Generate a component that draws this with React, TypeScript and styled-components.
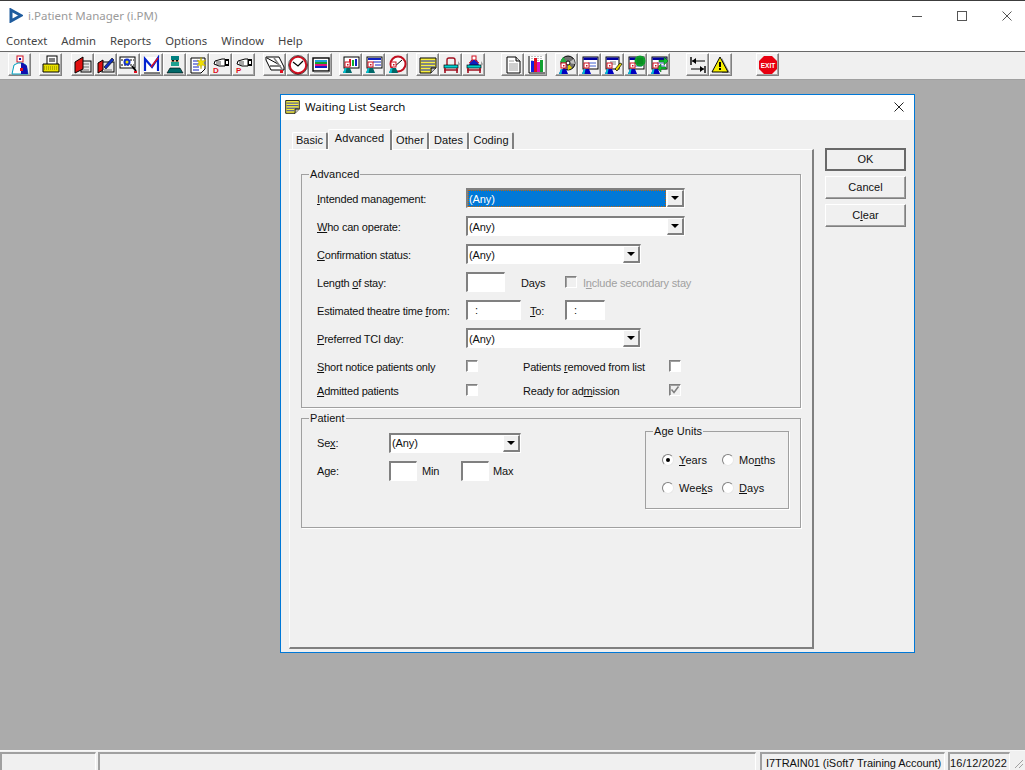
import React from 'react'
import styled, { createGlobalStyle } from 'styled-components'

const GlobalStyle = createGlobalStyle`
html, body {
  margin: 0;
  padding: 0;
  background: #ababab;
}
* {
  box-sizing: border-box;
}
`

const Page = styled.div`
width: 1025px;
height: 770px;
overflow: hidden;
display: flex;
flex-direction: column;
font-family: "Liberation Sans", Arial, sans-serif;
font-size: 11px;
letter-spacing: 0.05px;
color: #111;
`

const TitleBar = styled.div`
height: 30px;
flex: none;
background: #fff;
border-top: 1px solid #3c3c3c;
display: flex;
align-items: center;
padding: 0 13px 0 9px;
`

const AppTitle = styled.span`
margin-left: 5px;
font-family: "Noto Sans", sans-serif;
font-size: 11.5px;
letter-spacing: 0;
color: #9a9a9a;
`

const WindowControls = styled.div`
margin-left: auto;
display: flex;
align-items: center;
gap: 35px;
`

const MenuBar = styled.div`
height: 21px;
flex: none;
background: #fff;
display: flex;
align-items: center;
gap: 14px;
padding-left: 6px;
font-family: "Noto Sans", sans-serif;
font-size: 11.3px;
letter-spacing: 0;
color: #444;
`

const Toolbar = styled.div`
height: 28px;
flex: none;
background: #f0f0f0;
border-top: 1px solid #696969;
display: flex;
align-items: center;
padding: 0 0 2px 8px;
`

const ToolGroup = styled.div<{ $gap: number }>`
display: flex;
margin-left: ${p => p.$gap}px;
`

const ToolButton = styled.button`
width: 23px;
height: 23px;
padding: 0;
background: #f0f0f0;
border: 1px solid;
border-color: #fff #808080 #808080 #fff;
box-shadow: inset -1px -1px 0 #a8a8a8;
display: flex;
align-items: center;
justify-content: center;
`

const Workspace = styled.div`
flex: 1;
min-height: 0;
background: #ababab;
border-top: 1px solid #a0a0a0;
padding: 14px 0 0 280px;
`

const Dialog = styled.div`
width: 635px;
height: 559px;
background: #f0f0f0;
border: 1px solid #0078d7;
display: flex;
flex-direction: column;
`

const DialogTitle = styled.div`
height: 25px;
flex: none;
background: #fff;
display: flex;
align-items: center;
padding: 1px 10px 3px 3px;
font-family: "Noto Sans", sans-serif;
font-size: 11.5px;
letter-spacing: -0.1px;
color: #111;
`

const DialogTitleText = styled.span`
margin-left: 4px;
`

const DialogClose = styled.span`
margin-left: auto;
display: flex;
`

const DialogBody = styled.div`
flex: 1;
min-height: 0;
display: flex;
padding: 9px 0 3px 8px;
`

const TabColumn = styled.div`
width: 525px;
display: flex;
flex-direction: column;
`

const TabStrip = styled.div`
height: 20px;
flex: none;
display: flex;
align-items: flex-end;
padding-left: 3px;
position: relative;
z-index: 1;
`

const Tab = styled.div<{ $active?: boolean; $width: number }>`
width: ${p => p.$width}px;
height: ${p => (p.$active ? 21 : 17)}px;
margin-bottom: ${p => (p.$active ? -1 : 0)}px;
padding-top: ${p => (p.$active ? 2 : 1)}px;
background: #f0f0f0;
border-top: 1px solid #fff;
border-left: 1px solid #fff;
border-right: 2px solid #808080;
border-radius: 2px 2px 0 0;
text-align: center;
`

const TabPanel = styled.div`
flex: 1;
background: #f0f0f0;
border-top: 1px solid #fff;
border-left: 1px solid #fff;
border-right: 2px solid #808080;
border-bottom: 2px solid #808080;
padding: 24px 11px 0 11px;
`

const Group = styled.div<{ $height: number; $width?: number; $top?: number }>`
position: relative;
flex: none;
width: ${p => (p.$width ? `${p.$width}px` : 'auto')};
height: ${p => p.$height}px;
margin-top: ${p => p.$top ?? 0}px;
border: 1px solid #a0a0a0;
box-shadow: 1px 1px 0 #fff;
`

const Legend = styled.span`
position: absolute;
left: 7px;
top: -7px;
padding: 0 1px;
background: #f0f0f0;
line-height: 13px;
`

const AdvancedBody = styled.div`
padding: 9px 0 0 15px;
`

const Row = styled.div<{ $height?: number }>`
display: flex;
align-items: center;
height: ${p => p.$height ?? 28}px;
`

const Label = styled.span<{ $width?: number; $left?: number; $disabled?: boolean }>`
flex: none;
width: ${p => (p.$width ? `${p.$width}px` : 'auto')};
margin-left: ${p => p.$left ?? 0}px;
padding-top: 2px;
letter-spacing: -0.2px;
color: ${p => (p.$disabled ? '#a0a0a0' : 'inherit')};
white-space: nowrap;
`

const Sunken = styled.div<{ $width: number }>`
flex: none;
position: relative;
width: ${p => p.$width}px;
height: 20px;
background: #fff;
border-style: solid;
border-width: 2px 1px 1px 2px;
border-color: #808080 #fff #fff #808080;
line-height: 16px;
`

const TimeColon = styled.span`
margin-left: 7px;
`

const ComboValue = styled.div<{ $selected?: boolean }>`
height: 17px;
margin-right: 18px;
padding: 1px 0 0 1px;
line-height: 16px;
letter-spacing: -0.1px;
background: ${p => (p.$selected ? '#0078d7' : 'transparent')};
color: ${p => (p.$selected ? '#fff' : 'inherit')};
outline: ${p => (p.$selected ? '1px dotted #c2660a' : 'none')};
outline-offset: -1px;
`

const ComboButton = styled.div`
position: absolute;
right: 0;
top: 0;
width: 17px;
height: 17px;
background: #f0f0f0;
border-style: solid;
border-width: 1px 2px 2px 1px;
border-color: #fff #808080 #808080 #fff;
display: flex;
align-items: center;
justify-content: center;
&::after {
  content: "";
  border-style: solid;
  border-width: 4px 4px 0 4px;
  border-color: #000 transparent transparent transparent;
}
`

const Check = styled.div<{ $disabled?: boolean }>`
flex: none;
width: 12px;
height: 12px;
background: ${p => (p.$disabled ? '#f0f0f0' : '#fff')};
border-style: solid;
border-width: 1px;
border-color: #808080 #fff #fff #808080;
box-shadow: inset 1px 1px 0 #a0a0a0;
display: flex;
`

const PatientBody = styled.div`
display: flex;
justify-content: space-between;
padding: 10px 11px 0 15px;
`

const PatientFields = styled.div`
display: flex;
flex-direction: column;
${Label} {
  padding-top: 0;
}
${ComboValue} {
  padding-top: 0;
}
`

const Radio = styled.span<{ $on?: boolean }>`
flex: none;
width: 12px;
height: 12px;
border-radius: 50%;
background: #fff;
border: 1px solid;
border-color: #808080 #e8e8e8 #e8e8e8 #808080;
display: flex;
align-items: center;
justify-content: center;
margin-right: 5px;
&::after {
  content: "";
  width: 4px;
  height: 4px;
  border-radius: 50%;
  background: ${p => (p.$on ? '#000' : 'transparent')};
}
`

const RadioGrid = styled.div`
display: grid;
grid-template-columns: 60px 60px;
grid-auto-rows: 28px;
padding: 14px 0 0 16px;
`

const RadioItem = styled.div`
display: flex;
align-items: center;
white-space: nowrap;
`

const SideButtons = styled.div`
margin: 19px 0 0 11px;
width: 81px;
display: flex;
flex-direction: column;
gap: 5px;
`

const PushButton = styled.div<{ $default?: boolean }>`
height: 23px;
padding-bottom: 2px;
background: #f0f0f0;
border-style: solid;
border-width: ${p => (p.$default ? 2 : 1)}px;
border-color: ${p => (p.$default ? '#696969' : '#fff #808080 #808080 #fff')};
box-shadow: ${p => (p.$default ? 'none' : 'inset -1px -1px 0 #a0a0a0')};
display: flex;
align-items: center;
justify-content: center;
`

const StatusBar = styled.div`
height: 20px;
flex: none;
background: #f0f0f0;
border-top: 1px solid #f8f8f8;
padding-top: 1px;
display: flex;
position: relative;
`

const StatusPanel = styled.div<{ $width: number; $gap?: number; $pad?: number; $spacing?: number }>`
flex: none;
width: ${p => p.$width}px;
margin-right: ${p => p.$gap ?? 0}px;
padding: 3px 0 0 ${p => p.$pad ?? 0}px;
border-top: 2px solid #a0a0a0;
border-left: 2px solid #a0a0a0;
border-right: 1px solid #fff;
letter-spacing: ${p => p.$spacing ?? 0}px;
white-space: nowrap;
`

const Grip = styled.svg`
position: absolute;
right: 1px;
bottom: 1px;
`

const Icon: React.FC<{ children: React.ReactNode }> = ({ children }) => (
  <svg width="20" height="20" viewBox="0 0 20 20">{children}</svg>
)

// small figure with the red check head, used on most patient tools
const Figure: React.FC<{ x?: number; y?: number; color?: string }> = ({ x = 0, y = 0, color = '#0000c0' }) => (
  <g transform={`translate(${x} ${y})`}>
    <rect x="3" y="0" width="5" height="5" fill="#fff" stroke="#d01020" strokeWidth="1" />
    <rect x="5" y="2" width="1.5" height="1.5" fill="#d01020" />
    <path d="M1 11 L3 6 H8 L10 11 Z" fill={color} />
    <path d="M1 11 L3 6 H4.5 L3.5 11 Z" fill="#00c0d0" />
  </g>
)

const Form: React.FC = () => (
  <>
    <rect x="3" y="2" width="15" height="12" fill="#fff" stroke="#000" />
    <rect x="3.5" y="2.5" width="14" height="2.5" fill="#0000a0" />
    <path d="M8 8 H16 M8 11 H16" stroke="#4060d0" />
  </>
)

const Bed: React.FC = () => (
  <>
    <rect x="3" y="10" width="14" height="3" fill="#00d0d0" stroke="#000" strokeWidth="0.7" />
    <path d="M4 13 V18 M16 13 V18 M3 15 H17" stroke="#a01020" strokeWidth="1.6" />
    <path d="M17 6 L19 9 L17 12 Z" fill="#a0a0a0" />
  </>
)

const Hand: React.FC<{ letter: string }> = ({ letter }) => (
  <>
    <path d="M4 6 L11 4 H14 V11 H8 L3 9 Z" fill="#fff" stroke="#000" />
    <rect x="14" y="4" width="4" height="7" fill="#000" />
    <rect x="15" y="6" width="2" height="3" fill="#fff" />
    <path d="M5 7 H10 M5 9 H10" stroke="#000" strokeWidth="0.7" />
    <text x="2" y="18" fontFamily="Liberation Sans" fontWeight="700" fontSize="8" fill="#e01020">{letter}</text>
  </>
)

const ICONS: Record<string, React.ReactNode> = {
  doctor: (
    <>
      <rect x="7" y="1" width="6" height="6" fill="#fff" stroke="#d01020" />
      <rect x="9" y="3" width="2" height="2" fill="#0000a0" />
      <path d="M2 19 L4 10 L8 8 H12 L16 10 L18 19 Z" fill="#fff" stroke="#00a0c0" />
      <path d="M11 8 H13 L17 11 L18 19 H11 Z" fill="#1010b0" />
      <rect x="10" y="13" width="3" height="3" fill="#e01020" />
    </>
  ),
  printer: (
    <>
      <rect x="6" y="1" width="10" height="9" fill="#fff" stroke="#000" />
      <path d="M8 4 H14 M8 6 H14" stroke="#000" />
      <path d="M2 9 H18 V17 H2 Z" fill="#e8e000" stroke="#000" />
      <path d="M3 12 H17 M3 14 H17" stroke="#807800" strokeDasharray="1 1" />
    </>
  ),
  bookRed: (
    <>
      <rect x="8" y="6" width="10" height="11" fill="#e8e8e8" stroke="#000" />
      <path d="M9 9 H16 M9 12 H16 M9 15 H16" stroke="#707070" />
      <path d="M2 7 L10 2 V14 L2 18 Z" fill="#e01010" stroke="#000" />
    </>
  ),
  bookPen: (
    <>
      <rect x="6" y="7" width="12" height="10" fill="#e8e8e8" stroke="#000" />
      <path d="M2 8 L7 5 V15 L2 18 Z" fill="#e01010" stroke="#000" />
      <path d="M8 12 L16 3 L18 5 L10 14 Z" fill="#1030c0" stroke="#000" strokeWidth="0.6" />
      <path d="M8 15 H16" stroke="#707070" />
    </>
  ),
  search: (
    <>
      <rect x="1" y="2" width="15" height="11" fill="#fff" stroke="#000" />
      <path d="M2 5 H15 M2 10 H15" stroke="#000" strokeDasharray="2 1" />
      <circle cx="8" cy="7" r="3.5" fill="#1030d0" />
      <circle cx="8" cy="7" r="1.5" fill="#e8e000" />
      <path d="M13 11 L17 16" stroke="#000" strokeWidth="2" />
      <rect x="15" y="16" width="3" height="2" fill="#e01020" />
    </>
  ),
  mail: (
    <>
      <rect x="2" y="2" width="16" height="16" fill="#fff" />
      <path d="M3 16 V4 L10 12 L16 3 V16" fill="none" stroke="#0020d0" strokeWidth="2.2" />
      <path d="M9 12 L16 3" stroke="#e01020" strokeWidth="1.4" />
      <path d="M2 18 H18" stroke="#000" />
    </>
  ),
  surgeon: (
    <>
      <rect x="6" y="1" width="8" height="4" fill="#008080" />
      <rect x="6" y="5" width="8" height="5" fill="#e0b090" />
      <rect x="6" y="7" width="8" height="4" fill="#20a090" />
      <rect x="7" y="5" width="2" height="1.5" fill="#000" />
      <rect x="11" y="5" width="2" height="1.5" fill="#000" />
      <path d="M2 18 L5 13 H15 L18 18 Z" fill="#006868" stroke="#000" strokeWidth="0.6" />
    </>
  ),
  noteStar: (
    <>
      <path d="M3 3 H17 V14 L13 18 H3 Z" fill="#fff" stroke="#000" />
      <path d="M5 6 H11 M5 9 H11 M5 12 H11 M5 15 H11" stroke="#1020c0" />
      <path d="M13 2 L14 6 L18 5 L15 8 L18 11 L14 10 L13 14 L12 10 L9 11 L11 8 L9 5 L12 6 Z" fill="#f0e000" stroke="#a09000" strokeWidth="0.4" />
    </>
  ),
  handD: <Hand letter="D" />,
  handP: <Hand letter="P" />,
  letter: (
    <>
      <path d="M1 2 H14 L19 12 V15 H6 L1 5 Z" fill="#fff" stroke="#000" />
      <path d="M2 3 L13 9 M5 11 H16" stroke="#000" />
      <path d="M9 3 L17 14" stroke="#808080" strokeWidth="1.5" />
      <rect x="15" y="15" width="3" height="3" fill="#e01020" />
    </>
  ),
  clock: (
    <>
      <circle cx="10" cy="10" r="8.2" fill="#fff" stroke="#d01020" strokeWidth="2" />
      <circle cx="10" cy="10" r="9.5" fill="none" stroke="#000" strokeWidth="0.6" />
      <path d="M5 7 L10 11 L15 6" fill="none" stroke="#000" strokeWidth="1.2" />
    </>
  ),
  listing: (
    <>
      <rect x="2" y="3" width="16" height="13" fill="#fff" stroke="#000" strokeWidth="1.4" />
      <rect x="4" y="5" width="12" height="2" fill="#20a0e0" />
      <rect x="4" y="7" width="12" height="2" fill="#10a030" />
      <rect x="4" y="9" width="12" height="2" fill="#e01080" />
      <rect x="4" y="11" width="12" height="2" fill="#1020c0" />
      <path d="M3 17 H18" stroke="#808080" />
    </>
  ),
  monitorBars: (
    <>
      <rect x="3" y="2" width="15" height="11" fill="#fff" stroke="#000" />
      <rect x="8" y="4" width="2" height="7" fill="#e01020" />
      <rect x="11" y="5" width="2" height="6" fill="#10b030" />
      <rect x="14" y="4" width="2" height="7" fill="#1020c0" />
      <Figure x={1} y={7} color="#006868" />
    </>
  ),
  formFigure: (
    <>
      <rect x="3" y="2" width="15" height="11" fill="#fff" stroke="#000" />
      <path d="M4 4 H17" stroke="#1020c0" strokeWidth="2" />
      <path d="M9 7 H17 M11 10 H17" stroke="#1020c0" />
      <Figure x={1} y={7} color="#006868" />
    </>
  ),
  circleFigure: (
    <>
      <circle cx="11" cy="9" r="7.5" fill="#fff" stroke="#c01020" strokeWidth="2" />
      <path d="M7 12 L15 5" stroke="#000" />
      <Figure x={1} y={7} color="#006868" />
    </>
  ),
  notes: (
    <>
      <path d="M2 3 H18 V13 L13 18 H2 Z" fill="#f8f040" stroke="#000" />
      <path d="M3 6 H17 M3 9 H17 M3 12 H17 M3 15 H12" stroke="#1020c0" />
      <path d="M13 18 V13 H18" fill="#c0c0c0" stroke="#000" />
    </>
  ),
  bedEmpty: (
    <>
      <path d="M6 10 V5 Q6 3 8 3 H12 Q14 3 14 5 V10" fill="none" stroke="#a01020" strokeWidth="1.4" />
      <Bed />
    </>
  ),
  bedFigure: (
    <>
      <rect x="8" y="1" width="4" height="4" fill="#fff" stroke="#d01020" />
      <path d="M5 10 L7 5 H13 L15 10 Z" fill="#1020c0" />
      <path d="M5 8 L9 5 M15 8 L11 5" stroke="#e01020" />
      <Bed />
    </>
  ),
  page: (
    <>
      <path d="M4 2 H13 L17 6 V18 H4 Z" fill="#fff" stroke="#000" />
      <path d="M13 2 V6 H17" fill="#d0d0d0" stroke="#000" />
      <path d="M6 6 H11 M6 9 H15 M6 11 H15 M6 13 H15 M6 15 H15" stroke="#a0a0a0" />
    </>
  ),
  chart: (
    <>
      <rect x="2" y="1" width="16" height="17" fill="#fff" />
      <path d="M3 1 V18 H19" stroke="#000" fill="none" />
      <path d="M6 1 V16 M9 1 V16 M12 1 V16 M15 1 V16" stroke="#808080" strokeDasharray="1 1" />
      <rect x="5" y="6" width="3" height="11" fill="#1020e0" />
      <rect x="8" y="3" width="3" height="14" fill="#e01020" />
      <rect x="11" y="7" width="3" height="10" fill="#e010c0" />
      <rect x="14" y="5" width="3" height="12" fill="#10a030" />
    </>
  ),
  disk: (
    <>
      <circle cx="11" cy="8" r="7" fill="#707070" stroke="#000" />
      <path d="M11 8 L6 2 L3 7 Z" fill="#20b040" />
      <path d="M11 8 L17 4 L18 9 Z" fill="#c0c0c0" />
      <path d="M11 8 L11 15 L15 13 Z" fill="#e0d000" />
      <circle cx="11" cy="8" r="2" fill="#fff" stroke="#000" />
      <Figure x={1} y={8} />
    </>
  ),
  formBlue: (
    <>
      <Form />
      <Figure x={1} y={8} />
    </>
  ),
  formPen: (
    <>
      <rect x="3" y="2" width="13" height="12" fill="#fff" stroke="#000" />
      <rect x="3.5" y="2.5" width="12" height="2.5" fill="#0000a0" />
      <path d="M7 7 H13 M7 9 H13" stroke="#808080" />
      <path d="M12 14 L17 8 L19 9 L14 16 Z" fill="#e8d800" stroke="#000" strokeWidth="0.7" />
      <Figure x={1} y={8} />
    </>
  ),
  formGlobe: (
    <>
      <Form />
      <circle cx="14" cy="6" r="5.5" fill="#10b030" />
      <path d="M9 4 H19 M9 6 H19 M9 8 H19 M12 1 V11 M14 1 V11 M16 1 V11" stroke="#006010" strokeWidth="0.5" />
      <Figure x={1} y={8} />
    </>
  ),
  formArrows: (
    <>
      <Form />
      <path d="M10 5 H15 V2 L19 6 L15 10 V7 H10 Z" fill="#10c030" stroke="#006010" strokeWidth="0.5" />
      <path d="M17 12 H12 V9 L8 13 L12 17 V14 H17 Z" fill="#10c030" stroke="#006010" strokeWidth="0.5" />
      <Figure x={1} y={8} />
    </>
  ),
  arrowsBar: (
    <>
      <path d="M3 2 V10 M17 11 V18" stroke="#000" strokeWidth="1.4" />
      <path d="M4 6 H17 M3 14 H16" stroke="#000" />
      <path d="M4 6 L8 3 V9 Z M16 14 L12 11 V17 Z" fill="#000" />
    </>
  ),
  warning: (
    <>
      <path d="M19 18 L11 3 L11 18 Z" fill="#909090" />
      <path d="M9 2 L1 17 H17 Z" fill="#f8f000" stroke="#000" />
      <rect x="8" y="7" width="2" height="5" fill="#000" />
      <rect x="8" y="13" width="2" height="2" fill="#000" />
    </>
  ),
  exit: (
    <>
      <path d="M6 1 H14 L19 6 V14 L14 19 H6 L1 14 V6 Z" fill="#e80010" />
      <text x="10" y="12.5" textAnchor="middle" fontFamily="Liberation Sans" fontWeight="700" fontSize="6.5" fill="#fff">EXIT</text>
    </>
  ),
}

const TOOL_GROUPS: { gap: number; icons: string[] }[] = [
  { gap: 0, icons: ['doctor'] },
  { gap: 8, icons: ['printer'] },
  { gap: 9, icons: ['bookRed', 'bookPen', 'search', 'mail', 'surgeon', 'noteStar', 'handD', 'handP'] },
  { gap: 8, icons: ['letter', 'clock', 'listing'] },
  { gap: 7, icons: ['monitorBars', 'formFigure', 'circleFigure'] },
  { gap: 8, icons: ['notes', 'bedEmpty', 'bedFigure'] },
  { gap: 16, icons: ['page', 'chart'] },
  { gap: 8, icons: ['disk', 'formBlue', 'formPen', 'formGlobe', 'formArrows'] },
  { gap: 16, icons: ['arrowsBar', 'warning'] },
  { gap: 24, icons: ['exit'] },
]

const MENU = ['Context', 'Admin', 'Reports', 'Options', 'Window', 'Help']

const TABS = [
  { name: 'Basic', width: 36 },
  { name: 'Advanced', width: 64, active: true },
  { name: 'Other', width: 37 },
  { name: 'Dates', width: 40 },
  { name: 'Coding', width: 45 },
]

const Combo: React.FC<{ width: number; selected?: boolean }> = ({ width, selected }) => (
  <Sunken $width={width}>
    <ComboValue $selected={selected}>(Any)</ComboValue>
    <ComboButton />
  </Sunken>
)

const TickedBox: React.FC = () => (
  <Check $disabled>
    <svg width="10" height="10" viewBox="0 0 10 10">
      <path d="M1.5 4.5 L4 7.5 L8.5 1.5" fill="none" stroke="#808080" strokeWidth="1.5" />
    </svg>
  </Check>
)

export default function App() {
  return (
    <Page>
      <GlobalStyle />
      <TitleBar>
        <svg width="14" height="15" viewBox="0 0 14 15">
          <path d="M2 2 L12 7.5 L2 13 Z" fill="none" stroke="#1f5c9e" strokeWidth="3" />
        </svg>
        <AppTitle>i.Patient Manager (i.PM)</AppTitle>
        <WindowControls>
          <svg width="10" height="10" viewBox="0 0 10 10"><path d="M0 5.5 H10" stroke="#555" /></svg>
          <svg width="10" height="10" viewBox="0 0 10 10"><rect x="0.5" y="0.5" width="9" height="9" fill="none" stroke="#555" /></svg>
          <svg width="10" height="10" viewBox="0 0 10 10"><path d="M0.5 0.5 L9.5 9.5 M9.5 0.5 L0.5 9.5" stroke="#555" /></svg>
        </WindowControls>
      </TitleBar>
      <MenuBar>
        {MENU.map(item => <span key={item}>{item}</span>)}
      </MenuBar>
      <Toolbar>
        {TOOL_GROUPS.map((group, i) => (
          <ToolGroup key={i} $gap={group.gap}>
            {group.icons.map(name => (
              <ToolButton key={name}><Icon>{ICONS[name]}</Icon></ToolButton>
            ))}
          </ToolGroup>
        ))}
      </Toolbar>
      <Workspace>
        <Dialog>
          <DialogTitle>
            <svg width="17" height="17" viewBox="0 0 20 20">{ICONS.notes}</svg>
            <DialogTitleText>Waiting List Search</DialogTitleText>
            <DialogClose>
              <svg width="10" height="10" viewBox="0 0 10 10"><path d="M0.5 0.5 L9.5 9.5 M9.5 0.5 L0.5 9.5" stroke="#222" /></svg>
            </DialogClose>
          </DialogTitle>
          <DialogBody>
            <TabColumn>
              <TabStrip>
                {TABS.map(tab => (
                  <Tab key={tab.name} $width={tab.width} $active={tab.active}>{tab.name}</Tab>
                ))}
              </TabStrip>
              <TabPanel>
                <Group $height={234}>
                  <Legend>Advanced</Legend>
                  <AdvancedBody>
                    <Row>
                      <Label $width={149}><u>I</u>ntended management:</Label>
                      <Combo width={219} selected />
                    </Row>
                    <Row>
                      <Label $width={149}><u>W</u>ho can operate:</Label>
                      <Combo width={219} />
                    </Row>
                    <Row>
                      <Label $width={149}><u>C</u>onfirmation status:</Label>
                      <Combo width={175} />
                    </Row>
                    <Row>
                      <Label $width={149}>Length <u>o</u>f stay:</Label>
                      <Sunken $width={39} />
                      <Label $width={44} $left={16}>Days</Label>
                      <Check $disabled />
                      <Label $left={6} $disabled>I<u>n</u>clude secondary stay</Label>
                    </Row>
                    <Row>
                      <Label $width={149}>Estimated theatre time <u>f</u>rom:</Label>
                      <Sunken $width={55}><TimeColon>:</TimeColon></Sunken>
                      <Label $width={35} $left={9}><u>T</u>o:</Label>
                      <Sunken $width={40}><TimeColon>:</TimeColon></Sunken>
                    </Row>
                    <Row>
                      <Label $width={149}><u>P</u>referred TCI day:</Label>
                      <Combo width={175} />
                    </Row>
                    <Row>
                      <Label $width={149}><u>S</u>hort notice patients only</Label>
                      <Check />
                      <Label $width={146} $left={45}>Patients <u>r</u>emoved from list</Label>
                      <Check />
                    </Row>
                    <Row $height={20}>
                      <Label $width={149}><u>A</u>dmitted patients</Label>
                      <Check />
                      <Label $width={146} $left={45}>Ready for ad<u>m</u>ission</Label>
                      <TickedBox />
                    </Row>
                  </AdvancedBody>
                </Group>
                <Group $height={110} $top={10}>
                  <Legend>Patient</Legend>
                  <PatientBody>
                    <PatientFields>
                      <Row>
                        <Label $width={72}>Se<u>x</u>:</Label>
                        <Combo width={132} />
                      </Row>
                      <Row>
                        <Label $width={72}>Age:</Label>
                        <Sunken $width={28} />
                        <Label $width={39} $left={5}>Min</Label>
                        <Sunken $width={28} />
                        <Label $left={4}>Max</Label>
                      </Row>
                    </PatientFields>
                    <Group $height={78} $width={144} $top={2}>
                      <Legend>Age Units</Legend>
                      <RadioGrid>
                        <RadioItem><Radio $on /><span><u>Y</u>ears</span></RadioItem>
                        <RadioItem><Radio /><span>Mo<u>n</u>ths</span></RadioItem>
                        <RadioItem><Radio /><span>Wee<u>k</u>s</span></RadioItem>
                        <RadioItem><Radio /><span><u>D</u>ays</span></RadioItem>
                      </RadioGrid>
                    </Group>
                  </PatientBody>
                </Group>
              </TabPanel>
            </TabColumn>
            <SideButtons>
              <PushButton $default>OK</PushButton>
              <PushButton>Cancel</PushButton>
              <PushButton>C<u>l</u>ear</PushButton>
            </SideButtons>
          </DialogBody>
        </Dialog>
      </Workspace>
      <StatusBar>
        <StatusPanel $width={96} $gap={2} />
        <StatusPanel $width={658} $gap={4} />
        <StatusPanel $width={185} $gap={3} $pad={4} $spacing={-0.06}>I7TRAIN01 (iSoft7 Training Account)</StatusPanel>
        <StatusPanel $width={62} $pad={0} $spacing={0.2}>16/12/2022</StatusPanel>
        <Grip width="12" height="12" viewBox="0 0 12 12">
          <path d="M11 3 L3 11 M11 7 L7 11" stroke="#a0a0a0" />
        </Grip>
      </StatusBar>
    </Page>
  )
}
